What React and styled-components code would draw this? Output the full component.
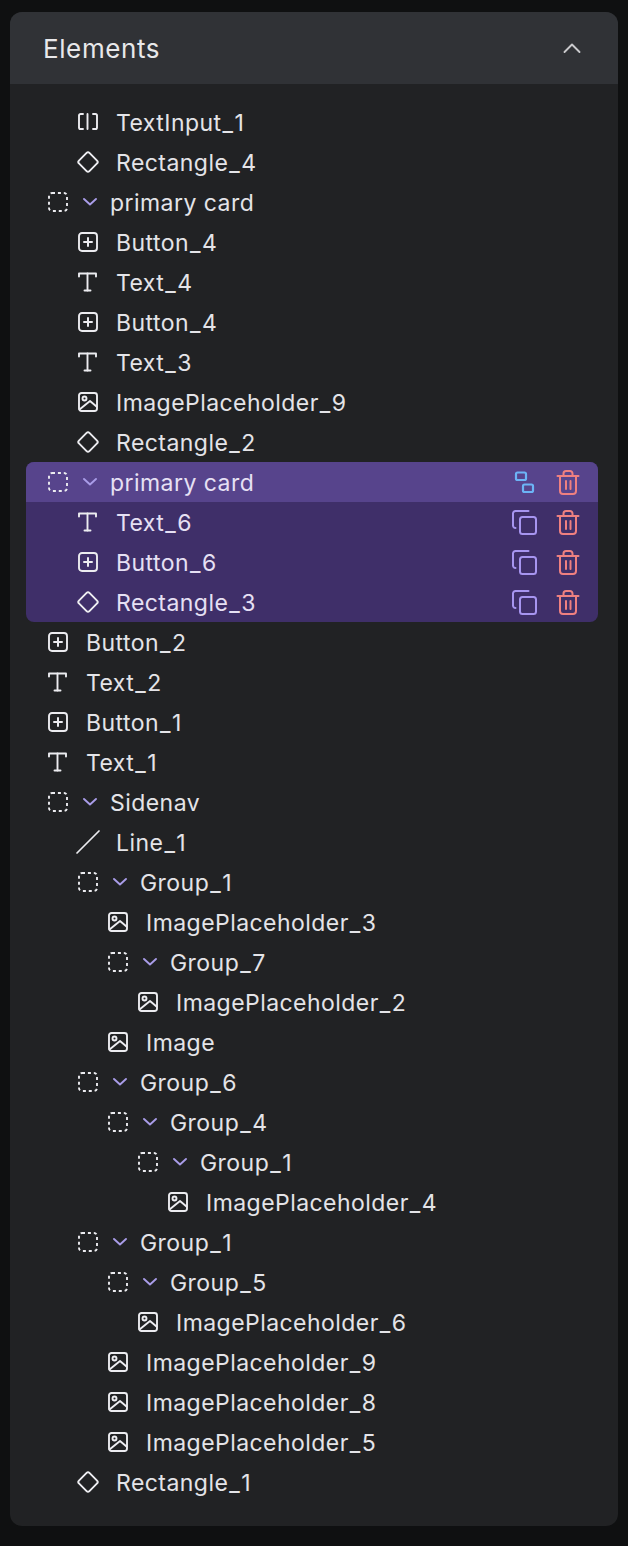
import React from 'react';
import styled, { createGlobalStyle } from 'styled-components';

const GlobalStyle = createGlobalStyle`
  html, body {
    margin: 0;
    background: #0f1011;
  }
`;

const Page = styled.div`
  box-sizing: border-box;
  width: 628px;
  height: 1546px;
  padding: 12px 10px 20px;
  font-family: Inter, "Liberation Sans", sans-serif;
`;

const Panel = styled.section`
  background: #212224;
  border-radius: 12px;
  overflow: hidden;
`;

const Header = styled.header`
  display: flex;
  align-items: center;
  justify-content: space-between;
  height: 72px;
  padding: 0 36px 0 33px;
  background: #303236;
`;

const Title = styled.h2`
  margin: 0;
  font-size: 26px;
  font-weight: 400;
  letter-spacing: 0.6px;
  color: #e8e8ea;
`;

const Tree = styled.div`
  padding: 18px 20px 24px 16px;
`;

const Selection = styled.div`
  border-radius: 8px;
  overflow: hidden;
  background: #3f2f69;
`;

const Row = styled.div`
  display: flex;
  align-items: center;
  height: 40px;
  padding-left: ${(p) => 22 + p.$depth * 30}px;
  padding-right: 18px;
  background: ${(p) => (p.$head ? '#57448c' : 'transparent')};
  color: ${(p) => (p.$selected ? '#e6e0f4' : '#e4e4e8')};
`;

const IconSlot = styled.span`
  display: flex;
  align-items: center;
  justify-content: center;
  flex: none;
  width: 20px;
  height: 20px;
  margin-right: ${(p) => (p.$group ? 14 : 18)}px;
  color: #ececf0;
`;

const ChevronSlot = styled.span`
  display: flex;
  flex: none;
  width: 16px;
  margin-right: 12px;
  color: #a99ce8;
`;

const Label = styled.span`
  padding-top: 2px;
  font-size: 23px;
  line-height: 40px;
  letter-spacing: 0.45px;
  white-space: nowrap;
`;

const Underscore = styled.span`
  margin: 0 1px;
`;

const Actions = styled.div`
  display: flex;
  align-items: center;
  gap: 19px;
  margin-left: auto;
`;

const ActionIcon = styled.span`
  display: flex;
  color: ${(p) => p.$color};
`;

const Svg = ({ size = 20, children, ...rest }) => (
  <svg
    width={size}
    height={size}
    viewBox={`0 0 ${size} ${size}`}
    fill="none"
    stroke="currentColor"
    strokeWidth="1.9"
    strokeLinecap="round"
    strokeLinejoin="round"
    style={{ overflow: 'visible', flex: 'none' }}
    {...rest}
  >
    {children}
  </svg>
);

const InputIcon = () => (
  <Svg>
    <path d="M5 2H2.6A1.6 1.6 0 0 0 1 3.6v11.8A1.6 1.6 0 0 0 2.6 17H5" />
    <path d="M9.5 2v15" />
    <path d="M15 2h2.4A1.6 1.6 0 0 1 19 3.6v11.8a1.6 1.6 0 0 1-1.6 1.6H15" />
  </Svg>
);

const DiamondIcon = () => (
  <Svg>
    <rect x="2.6" y="2.6" width="14.8" height="14.8" rx="2" transform="rotate(45 10 10)" />
  </Svg>
);

const GroupIcon = () => (
  <Svg>
    <rect x="1" y="1" width="18" height="18" rx="3" strokeDasharray="3 2.9" strokeLinecap="butt" />
  </Svg>
);

const TextIcon = () => (
  <Svg>
    <path d="M1 4.5V1.5h17v3" />
    <path d="M9.5 1.5v17" />
    <path d="M6.5 18.5h6" />
  </Svg>
);

const ButtonIcon = () => (
  <Svg>
    <rect x="1" y="1" width="18" height="18" rx="3" />
    <path d="M10 6v8M6 10h8" strokeWidth="2" />
  </Svg>
);

const ImageIcon = () => (
  <Svg>
    <rect x="1" y="1" width="18" height="18" rx="2.5" />
    <circle cx="6.5" cy="6.5" r="2" />
    <path d="M1.5 17.5 12 9l6.5 5.5" />
  </Svg>
);

const LineIcon = () => (
  <Svg>
    <path d="M-1 21 21 -1" strokeWidth="1.7" />
  </Svg>
);

const ChevronIcon = () => (
  <Svg size={16}>
    <path d="M2 5l6 5.5L14 5" />
  </Svg>
);

const CollapseIcon = () => (
  <Svg style={{ color: '#c9c9cc', overflow: 'visible' }}>
    <path d="M2.5 14 10 6.5l7.5 7.5" />
  </Svg>
);

const CopyIcon = () => (
  <Svg size={25} strokeWidth="2">
    <rect x="8" y="7" width="16" height="17" rx="2.5" />
    <path d="M16.5 1H3.5A2.5 2.5 0 0 0 1 3.5V15.5a2.5 2.5 0 0 0 2.5 2.5" />
  </Svg>
);

const UngroupIcon = () => (
  <Svg size={25} strokeWidth="2.2">
    <rect x="4" y="2.5" width="10" height="7.5" rx="1.6" />
    <rect x="11" y="14.5" width="10" height="7.5" rx="1.6" />
  </Svg>
);

const TrashIcon = () => (
  <Svg size={24} strokeWidth="2">
    <path d="M1.5 6h21" />
    <path d="M7.5 6V3.5A2.5 2.5 0 0 1 10 1h4a2.5 2.5 0 0 1 2.5 2.5V6" />
    <path d="M4 6v15a3 3 0 0 0 3 3h10a3 3 0 0 0 3-3V6" />
    <path d="M10 11v8M14.5 11v8" />
  </Svg>
);

const icons = {
  input: InputIcon,
  rect: DiamondIcon,
  text: TextIcon,
  button: ButtonIcon,
  image: ImageIcon,
  line: LineIcon,
  group: GroupIcon,
};

const before = [
  ['input', 'TextInput_1', 1],
  ['rect', 'Rectangle_4', 1],
  ['group', 'primary card', 0],
  ['button', 'Button_4', 1],
  ['text', 'Text_4', 1],
  ['button', 'Button_4', 1],
  ['text', 'Text_3', 1],
  ['image', 'ImagePlaceholder_9', 1],
  ['rect', 'Rectangle_2', 1],
];

const selected = [
  ['group', 'primary card', 0],
  ['text', 'Text_6', 1],
  ['button', 'Button_6', 1],
  ['rect', 'Rectangle_3', 1],
];

const after = [
  ['button', 'Button_2', 0],
  ['text', 'Text_2', 0],
  ['button', 'Button_1', 0],
  ['text', 'Text_1', 0],
  ['group', 'Sidenav', 0],
  ['line', 'Line_1', 1],
  ['group', 'Group_1', 1],
  ['image', 'ImagePlaceholder_3', 2],
  ['group', 'Group_7', 2],
  ['image', 'ImagePlaceholder_2', 3],
  ['image', 'Image', 2],
  ['group', 'Group_6', 1],
  ['group', 'Group_4', 2],
  ['group', 'Group_1', 3],
  ['image', 'ImagePlaceholder_4', 4],
  ['group', 'Group_1', 1],
  ['group', 'Group_5', 2],
  ['image', 'ImagePlaceholder_6', 3],
  ['image', 'ImagePlaceholder_9', 2],
  ['image', 'ImagePlaceholder_8', 2],
  ['image', 'ImagePlaceholder_5', 2],
  ['rect', 'Rectangle_1', 1],
];

const TreeRow = ({ item, selected: isSelected }) => {
  const [type, label, depth] = item;
  const Icon = icons[type];
  const isGroup = type === 'group';
  const [name, suffix] = label.split('_');
  return (
    <Row $depth={depth} $head={isSelected && isGroup} $selected={isSelected}>
      <IconSlot $group={isGroup}>
        <Icon />
      </IconSlot>
      {isGroup && (
        <ChevronSlot>
          <ChevronIcon />
        </ChevronSlot>
      )}
      <Label>
        {name}
        {suffix && (
          <>
            <Underscore>_</Underscore>
            {suffix}
          </>
        )}
      </Label>
      {isSelected && (
        <Actions>
          {isGroup ? (
            <ActionIcon $color="#6cb4f6">
              <UngroupIcon />
            </ActionIcon>
          ) : (
            <ActionIcon $color="#a795f0">
              <CopyIcon />
            </ActionIcon>
          )}
          <ActionIcon $color="#ef8080">
            <TrashIcon />
          </ActionIcon>
        </Actions>
      )}
    </Row>
  );
};

export default function App() {
  return (
    <>
      <GlobalStyle />
      <Page>
        <Panel>
          <Header>
            <Title>Elements</Title>
            <CollapseIcon />
          </Header>
          <Tree>
            {before.map((item, i) => (
              <TreeRow key={i} item={item} />
            ))}
            <Selection>
              {selected.map((item, i) => (
                <TreeRow key={i} item={item} selected />
              ))}
            </Selection>
            {after.map((item, i) => (
              <TreeRow key={i} item={item} />
            ))}
          </Tree>
        </Panel>
      </Page>
    </>
  );
}
